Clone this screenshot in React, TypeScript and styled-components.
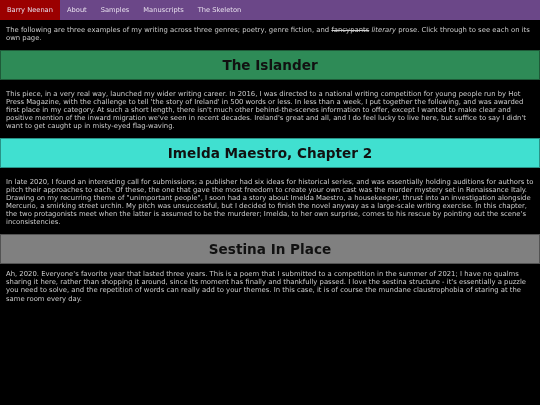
import styled, { createGlobalStyle } from "styled-components";

const GlobalStyle = createGlobalStyle`
  html, body {
    margin: 0;
    padding: 0;
    background: #000;
  }
  body {
    font-family: "DejaVu Sans", Verdana, sans-serif;
    font-size: 6.85px;
    color: #cccccc;
    -webkit-font-smoothing: antialiased;
  }
`;

const samples = [
  {
    title: "The Islander",
    color: "#2e8b57",
    text: "This piece, in a very real way, launched my wider writing career. In 2016, I was directed to a national writing competition for young people run by Hot Press Magazine, with the challenge to tell 'the story of Ireland' in 500 words or less. In less than a week, I put together the following, and was awarded first place in my category. At such a short length, there isn't much other behind-the-scenes information to offer, except I wanted to make clear and positive mention of the inward migration we've seen in recent decades. Ireland's great and all, and I do feel lucky to live here, but suffice to say I didn't want to get caught up in misty-eyed flag-waving.",
  },
  {
    title: "Imelda Maestro, Chapter 2",
    color: "#40e0d0",
    text: "In late 2020, I found an interesting call for submissions; a publisher had six ideas for historical series, and was essentially holding auditions for authors to pitch their approaches to each. Of these, the one that gave the most freedom to create your own cast was the murder mystery set in Renaissance Italy. Drawing on my recurring theme of \"unimportant people\", I soon had a story about Imelda Maestro, a housekeeper, thrust into an investigation alongside Mercurio, a smirking street urchin. My pitch was unsuccessful, but I decided to finish the novel anyway as a large-scale writing exercise. In this chapter, the two protagonists meet when the latter is assumed to be the murderer; Imelda, to her own surprise, comes to his rescue by pointing out the scene's inconsistencies.",
  },
  {
    title: "Sestina In Place",
    color: "#808080",
    text: "Ah, 2020. Everyone's favorite year that lasted three years. This is a poem that I submitted to a competition in the summer of 2021; I have no qualms sharing it here, rather than shopping it around, since its moment has finally and thankfully passed. I love the sestina structure - it's essentially a puzzle you need to solve, and the repetition of words can really add to your themes. In this case, it is of course the mundane claustrophobia of staring at the same room every day.",
    tight: true,
  },
];

export default function App() {
  return (
    <Page>
      <GlobalStyle />
      <NavBar>
        <NavItem $home>Barry Neenan</NavItem>
        <NavItem>About</NavItem>
        <NavItem>Samples</NavItem>
        <NavItem>Manuscripts</NavItem>
        <NavItem>The Skeleton</NavItem>
      </NavBar>
      <Intro>
        The following are three examples of my writing across three genres; poetry, genre fiction, and{" "}
        <s>fancypants</s> <i>literary</i> prose. Click through to see each on its own page.
      </Intro>
      {samples.map((s) => (
        <Section key={s.title}>
          <Heading $bg={s.color}>{s.title}</Heading>
          <Blurb $tight={s.tight}>{s.text}</Blurb>
        </Section>
      ))}
    </Page>
  );
}

const Page = styled.div`
  will-change: transform;
`;

const NavBar = styled.nav`
  display: flex;
  height: 20px;
  background: #6b4788;
  font-size: 6.7px;
`;

const NavItem = styled.a<{ $home?: boolean }>`
  display: flex;
  align-items: center;
  padding: 0 7px;
  color: #e8e0ee;
  background: ${(p) => (p.$home ? "#9b0000" : "transparent")};
  cursor: pointer;
`;

const Intro = styled.p`
  margin: 6px 0 8px;
  padding: 0 6px;
  line-height: 8.1px;
`;

const Section = styled.section`
  display: flex;
  flex-direction: column;
`;

const Heading = styled.h2<{ $bg: string }>`
  margin: 0;
  height: 30px;
  box-sizing: border-box;
  display: flex;
  align-items: center;
  justify-content: center;
  background: ${(p) => p.$bg};
  border: 1px solid rgba(0, 0, 0, 0.35);
  color: #111;
  font-size: 13.6px;
  font-weight: bold;
`;

const Blurb = styled.p<{ $tight?: boolean }>`
  margin: ${(p) => (p.$tight ? "6px" : "9.5px")} 0 8px;
  padding: 0 6px;
  line-height: 8.1px;
`;
